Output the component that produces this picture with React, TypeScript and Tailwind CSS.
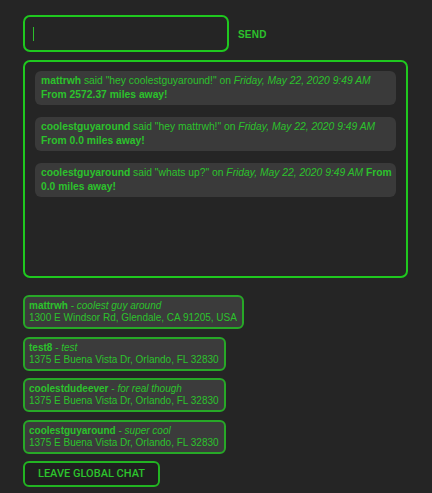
import React from "react";

const messages = [
  { user: "mattrwh", text: "hey coolestguyaround!", dist: "2572.37" },
  { user: "coolestguyaround", text: "hey mattrwh!", dist: "0.0" },
  { user: "coolestguyaround", text: "whats up?", dist: "0.0" },
];

const users = [
  { name: "mattrwh", status: "coolest guy around", addr: "1300 E Windsor Rd, Glendale, CA 91205, USA" },
  { name: "test8", status: "test", addr: "1375 E Buena Vista Dr, Orlando, FL 32830" },
  { name: "coolestdudeever", status: "for real though", addr: "1375 E Buena Vista Dr, Orlando, FL 32830" },
  { name: "coolestguyaround", status: "super cool", addr: "1375 E Buena Vista Dr, Orlando, FL 32830" },
];

export default function App() {
  return (
    <div
      className="min-h-[493px] w-[432px] bg-[#252525] text-[#2cc22c] pl-[23px] pt-[15px]"
      style={{ fontFamily: '"Liberation Sans", Arial, sans-serif' }}
    >
      <div className="flex items-center">
        <div className="w-[206px] h-[37px] border-2 border-[#1fc81f] rounded-[7px] flex items-center pl-[8px]">
          <div className="w-px h-[14px] bg-[#2cbf2c]" />
        </div>
        <div className="ml-[9px] mt-[2px] text-[10px] font-bold tracking-[0.2px]">SEND</div>
      </div>

      <div className="mt-[8px] w-[385px] h-[218px] border-2 border-[#1fc81f] rounded-[7px] px-[10px] pt-[9px] flex flex-col gap-[12px]">
        {messages.map((m, i) => (
          <div key={i} className="bg-[#3a3a3a] rounded-[6px] pl-[6px] pr-[4px] py-[3px] text-[10.3px] leading-[14px]">
            <span className="font-bold">{m.user}</span> said "{m.text}" on{" "}
            <span className="italic">Friday, May 22, 2020 9:49 AM</span>{" "}
            <span className="font-bold">From {m.dist} miles away!</span>
          </div>
        ))}
      </div>

      <div className="mt-[17px] flex flex-col items-start gap-[7.5px]">
        {users.map((u, i) => (
          <div
            key={i}
            className="bg-[#3b3b3b] border-2 border-[#27a827] rounded-[6px] pl-[4px] pr-[5px] py-[3px] text-[10px] leading-[12px]"
          >
            <div>
              <span className="font-bold">{u.name}</span> - <span className="italic">{u.status}</span>
            </div>
            <div>{u.addr}</div>
          </div>
        ))}
        <button
          className="w-[137px] h-[26px] bg-[#1f1f1f] border-2 border-[#22b422] rounded-[6px] text-[11px] font-medium text-[#2cc42c] flex items-center justify-center"
          style={{ fontFamily: "Roboto, sans-serif" }}
        >
          LEAVE GLOBAL CHAT
        </button>
      </div>
    </div>
  );
}
